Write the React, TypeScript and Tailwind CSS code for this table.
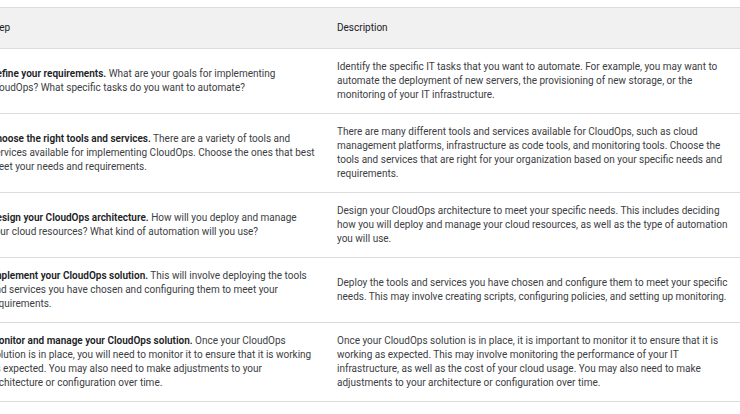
import React from 'react';

const rows = [
  {
    title: 'Define your requirements.',
    step: 'What are your goals for implementing CloudOps? What specific tasks do you want to automate?',
    desc: 'Identify the specific IT tasks that you want to automate. For example, you may want to automate the deployment of new servers, the provisioning of new storage, or the monitoring of your IT infrastructure.',
  },
  {
    title: 'Choose the right tools and services.',
    step: 'There are a variety of tools and services available for implementing CloudOps. Choose the ones that best meet your needs and requirements.',
    desc: 'There are many different tools and services available for CloudOps, such as cloud management platforms, infrastructure as code tools, and monitoring tools. Choose the tools and services that are right for your organization based on your specific needs and requirements.',
  },
  {
    title: 'Design your CloudOps architecture.',
    step: 'How will you deploy and manage your cloud resources? What kind of automation will you use?',
    desc: 'Design your CloudOps architecture to meet your specific needs. This includes deciding how you will deploy and manage your cloud resources, as well as the type of automation you will use.',
  },
  {
    title: 'Implement your CloudOps solution.',
    step: 'This will involve deploying the tools and services you have chosen and configuring them to meet your requirements.',
    desc: 'Deploy the tools and services you have chosen and configure them to meet your specific needs. This may involve creating scripts, configuring policies, and setting up monitoring.',
  },
  {
    title: 'Monitor and manage your CloudOps solution.',
    step: 'Once your CloudOps solution is in place, you will need to monitor it to ensure that it is working as expected. You may also need to make adjustments to your architecture or configuration over time.',
    desc: 'Once your CloudOps solution is in place, it is important to monitor it to ensure that it is working as expected. This may involve monitoring the performance of your IT infrastructure, as well as the cost of your cloud usage. You may also need to make adjustments to your architecture or configuration over time.',
  },
];

const App = () => {
  return (
    <div className="w-[740px] h-[414px] overflow-hidden bg-white pt-[7px] font-['Roboto',sans-serif] text-[10px] leading-[14px] text-[#3c4043]">
      <div className="-ml-[18px] w-[767px] border-t border-[#dadce0]">
        {/* Header */}
        <div className="grid grid-cols-[347px_420px] items-center h-[41px] bg-[#f1f1f1] border-b border-[#dadce0] text-[#202124]">
          <div className="px-2">Step</div>
          <div className="px-2">Description</div>
        </div>

        {/* Rows */}
        {rows.map((row, index) => (
          <div
            key={index}
            className="grid grid-cols-[347px_420px] items-center border-b border-[#dadce0]"
          >
            <div className="pl-2 pr-[13px] py-[11px]">
              <span className="font-semibold text-[#202124]">{row.title}</span> {row.step}
            </div>
            <div className="pl-2 pr-[14px] py-[11px]">{row.desc}</div>
          </div>
        ))}
      </div>
    </div>
  );
};

export default App;
